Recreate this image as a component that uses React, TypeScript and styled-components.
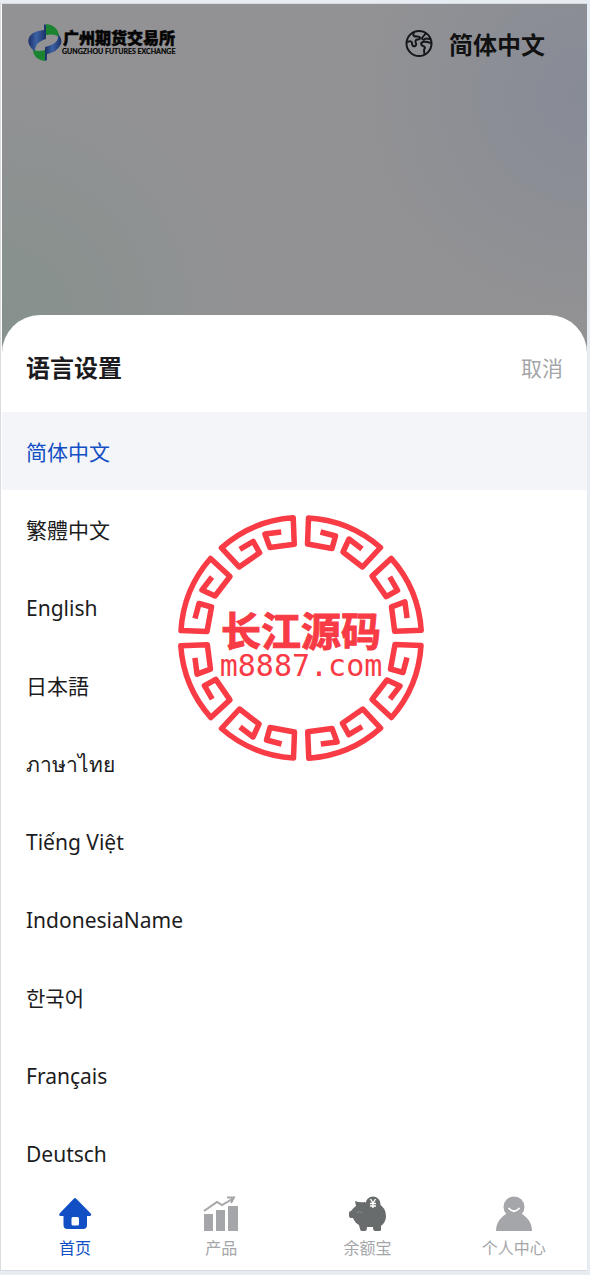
import React, { useState } from "react";
import styled, { createGlobalStyle } from "styled-components";

const GlobalStyle = createGlobalStyle`
  * { box-sizing: border-box; }
  body {
    margin: 0;
    background: #e7ecf3;
    font-family: "Noto Sans", "Noto Sans CJK SC", sans-serif;
    color: #1c1c1e;
  }
  button {
    border: 0;
    padding: 0;
    background: none;
    font: inherit;
    color: inherit;
    cursor: pointer;
  }
`;

const Page = styled.div`
  display: flex;
  min-height: 100vh;
  padding: 3px 3px 4px 0;
`;

const Frame = styled.div`
  position: relative;
  display: flex;
  flex-direction: column;
  flex: 1;
  border: 1px solid #dadbe1;
  border-right-width: 0;
  padding-left: 1px;
  background: #fff;
`;

const Backdrop = styled.div`
  display: flex;
  flex-direction: column;
  flex: 1;
  background:
    radial-gradient(circle at 100% 90px, #878b96 0, rgba(135, 139, 150, 0) 230px),
    radial-gradient(circle at 0 310px, #86918d 0, rgba(134, 145, 141, 0) 240px),
    #929294;
`;

const TopBar = styled.header`
  display: flex;
  justify-content: space-between;
  align-items: center;
  height: 80px;
  margin-bottom: 231px;
  padding: 0 42px 0 25px;
`;

const LanguageButton = styled.button`
  display: flex;
  align-items: center;
  gap: 16px;
  color: #111;
  font-family: "Noto Sans CJK SC", sans-serif;
  font-size: 24px;
  line-height: 36px;
  font-weight: 700;
`;

const Sheet = styled.section`
  flex: 1;
  background: #fff;
  border-radius: 38px 38px 0 0;
`;

const SheetHeader = styled.div`
  display: flex;
  justify-content: space-between;
  align-items: center;
  height: 97px;
  padding: 8px 24px 0;
`;

const SheetTitle = styled.h2`
  margin: 0;
  font-size: 24px;
  line-height: 36px;
`;

const CancelButton = styled.button`
  color: #a5a6a9;
  font-size: 21px;
  line-height: 32px;
`;

const LanguageList = styled.ul`
  list-style: none;
  margin: 0;
  padding: 0;
`;

const LanguageRow = styled.button<{ $active: boolean }>`
  display: block;
  width: 100%;
  height: 78px;
  padding: 2px 24px 0;
  text-align: left;
  font-size: 21px;
  line-height: 32px;
  background: ${(p) => (p.$active ? "#f3f5f8" : "transparent")};
  color: ${(p) => (p.$active ? "#124fc4" : "#1c1c1e")};
`;

const TabBar = styled.nav`
  display: grid;
  grid-template-columns: repeat(4, 1fr);
  height: 78px;
  background: #fff;
`;

const Tab = styled.a<{ $active?: boolean }>`
  display: flex;
  flex-direction: column;
  align-items: center;
  gap: 4px;
  padding-top: 4px;
  text-decoration: none;
  font-size: 16px;
  line-height: 24px;
  color: ${(p) => (p.$active ? "#124fc4" : "#a5a6a9")};
`;

const Watermark = styled.svg`
  position: absolute;
  top: 507px;
  left: 50%;
  transform: translateX(-50%);
  margin-left: 7px;
  pointer-events: none;
`;

const Logo = () => (
  <svg width="152" height="42" viewBox="0 0 152 42" role="img" aria-label="广州期货交易所">
    <defs>
      <linearGradient id="blue" x1="0" x2="1">
        <stop offset="0" stopColor="#1b2f63" />
        <stop offset="0.45" stopColor="#3c62a4" />
        <stop offset="1" stopColor="#1b3168" />
      </linearGradient>
    </defs>
    <path d="M19 1C27 2 32 6 32 14C28 11 24 11 19 12Z" fill="#1c8431" />
    <path d="M6 26C10 29 14 28 18 27V38C10 37 6 33 6 26Z" fill="#1c8431" />
    <path d="M17 1L19 2V16C12 18 8 22 8 28L6 27C1 22 0 17 3 13C7 8 12 8 17 7Z" fill="url(#blue)" />
    <path d="M18 38L20 37V31C26 30 31 27 34 21C35 17 34 14 31 11V14C31 19 26 22 18 24Z" fill="url(#blue)" />
    <text x="36" y="21" fontFamily="Noto Sans CJK SC, sans-serif" fontSize="16" fontWeight="900" stroke="#050505" strokeWidth="0.5" fill="#050505">广州期货交易所</text>
    <text x="35" y="31" fontFamily="Lato, sans-serif" fontSize="7" fontWeight="700" stroke="#050505" strokeWidth="0.2" fill="#050505">GUNGZHOU FUTURES EXCHANGE</text>
  </svg>
);

const GlobeIcon = () => (
  <svg width="28" height="28" viewBox="0 0 28 28" fill="none" stroke="#16171a" strokeWidth="2" strokeLinejoin="round" aria-hidden="true">
    <circle cx="14" cy="13.500" r="12.500" />
    <path d="M2 12C5 11 7 11 7 13C7 17 10 17 11 15C12 13 9 12 11 10C12 9 15 10 15 8C15 6 11 7 9 6C8 5 8 4 9 2" />
    <path d="M21 3L17 8C17 10 19 10 20 9C22 8 23 9 25 9M26 13C23 12 20 11 18 12C15 13 16 15 18 16C21 17 20 18 19 20C19 22 19 23 20 25" />
  </svg>
);

const HomeIcon = () => (
  <svg width="36" height="36" viewBox="0 0 36 36" aria-hidden="true">
    <path
      fill="#124fc4"
      fillRule="evenodd"
      d="M17 2.500Q18 1.600 19 2.500L33.300 17C35 19 34 20 32.500 20H30V29Q30 33 26 33H10.500Q6.500 33 6.500 29V20H4C2 20 1.500 19 3 17ZM16 21Q14.500 21 14.500 22.500V28Q14.500 29.500 16 29.500H20.500Q22 29.500 22 28V22.500Q22 21 20.500 21Z"
    />
  </svg>
);

const ChartIcon = () => (
  <svg width="36" height="36" viewBox="0 0 36 36" fill="#a5a6a9" aria-hidden="true">
    <path d="M1 18H10V35H1ZM13 14H22V35H13ZM25 10H35V35H25Z" />
    <path d="M1 15L14 6L19 9L31 2M24 1.500H31L28 7" fill="none" stroke="#a5a6a9" strokeWidth="2" />
  </svg>
);

const PiggyIcon = () => (
  <svg width="38" height="36" viewBox="0 0 38 36" fill="#696c6c" aria-hidden="true">
    <path d="M6 5Q11 7 16 6Q18 9 20 8H30Q37 12 37 20Q37 26 32 30V34Q32 35 30 35H26Q24 35 24 31H18Q18 35 16 35H13Q11 35 11 33L10 29Q6 27 4 22H2Q0 22 0 20V17Q0 15 2 15Q4 12 7 10Z" />
    <circle cx="24" cy="8" r="7.500" />
    <path d="M8 17Q10 14 13 17" fill="none" stroke="#8b8d8d" strokeWidth="1" />
    <path d="M21.500 3L24 7L26.500 3M24 7V12M21 7.500H27M21 10H27" fill="none" stroke="#fff" strokeWidth="1.400" />
  </svg>
);

const PersonIcon = () => (
  <svg width="38" height="36" viewBox="0 0 38 36" fill="#a5a6a9" aria-hidden="true">
    <circle cx="19" cy="11" r="10.500" />
    <path d="M1 35C1 27 5 22 11 18H27C33 22 37 27 37 35Z" />
    <path d="M14 12.500Q19 18 24 12.500" fill="none" stroke="#fff" strokeWidth="1.800" strokeLinecap="round" />
  </svg>
);

const RING_ANGLES = [0, 45, 90, 135, 180, 225, 270, 315];

const Stamp = () => (
  <Watermark width="254" height="254" viewBox="-127 -127 254 254" aria-hidden="true">
    <g fill="none" stroke="#f83b45" strokeWidth="5.500" strokeLinejoin="round">
      {RING_ANGLES.map((angle) => (
        <path
          key={angle}
          transform={`rotate(${angle})`}
          d="M19.500 -106L34.500 -102L31 -89.500L6.500 -94L7.500 -120A120 120 0 0 1 79.500 -90.500L61.500 -71L42 -86L48 -99L61 -89"
        />
      ))}
    </g>
    <g fill="#f83b45" textAnchor="middle">
      <text y="8" fontFamily="Noto Sans CJK SC, sans-serif" fontSize="40" fontWeight="700" stroke="#f83b45" strokeWidth="1">长江源码</text>
      <text y="38" fontFamily="DejaVu Sans Mono, monospace" fontSize="30">m8887.com</text>
    </g>
  </Watermark>
);

const LANGUAGES = [
  { lang: "zh-CN", name: "简体中文" },
  { lang: "zh-TW", name: "繁體中文" },
  { lang: "en", name: "English" },
  { lang: "ja", name: "日本語" },
  { lang: "th", name: "ภาษาไทย" },
  { lang: "vi", name: "Tiếng Việt" },
  { lang: "id", name: "IndonesiaName" },
  { lang: "ko", name: "한국어" },
  { lang: "fr", name: "Français" },
  { lang: "de", name: "Deutsch" },
];

const TABS = [
  { label: "首页", href: "#home", Icon: HomeIcon },
  { label: "产品", href: "#products", Icon: ChartIcon },
  { label: "余额宝", href: "#balance", Icon: PiggyIcon },
  { label: "个人中心", href: "#profile", Icon: PersonIcon },
];

export default function App() {
  const [selected, setSelected] = useState("zh-CN");

  return (
    <Page>
      <GlobalStyle />
      <Frame>
        <Backdrop>
          <TopBar>
            <Logo />
            <LanguageButton type="button">
              <GlobeIcon />
              简体中文
            </LanguageButton>
          </TopBar>
          <Sheet>
            <SheetHeader>
              <SheetTitle>语言设置</SheetTitle>
              <CancelButton type="button">取消</CancelButton>
            </SheetHeader>
            <LanguageList>
              {LANGUAGES.map(({ lang, name }) => (
                <li key={lang}>
                  <LanguageRow type="button" lang={lang} $active={lang === selected} onClick={() => setSelected(lang)}>
                    {name}
                  </LanguageRow>
                </li>
              ))}
            </LanguageList>
          </Sheet>
        </Backdrop>
        <TabBar>
          {TABS.map(({ label, href, Icon }, index) => (
            <Tab key={href} href={href} $active={index === 0}>
              <Icon />
              {label}
            </Tab>
          ))}
        </TabBar>
        <Stamp />
      </Frame>
    </Page>
  );
}
